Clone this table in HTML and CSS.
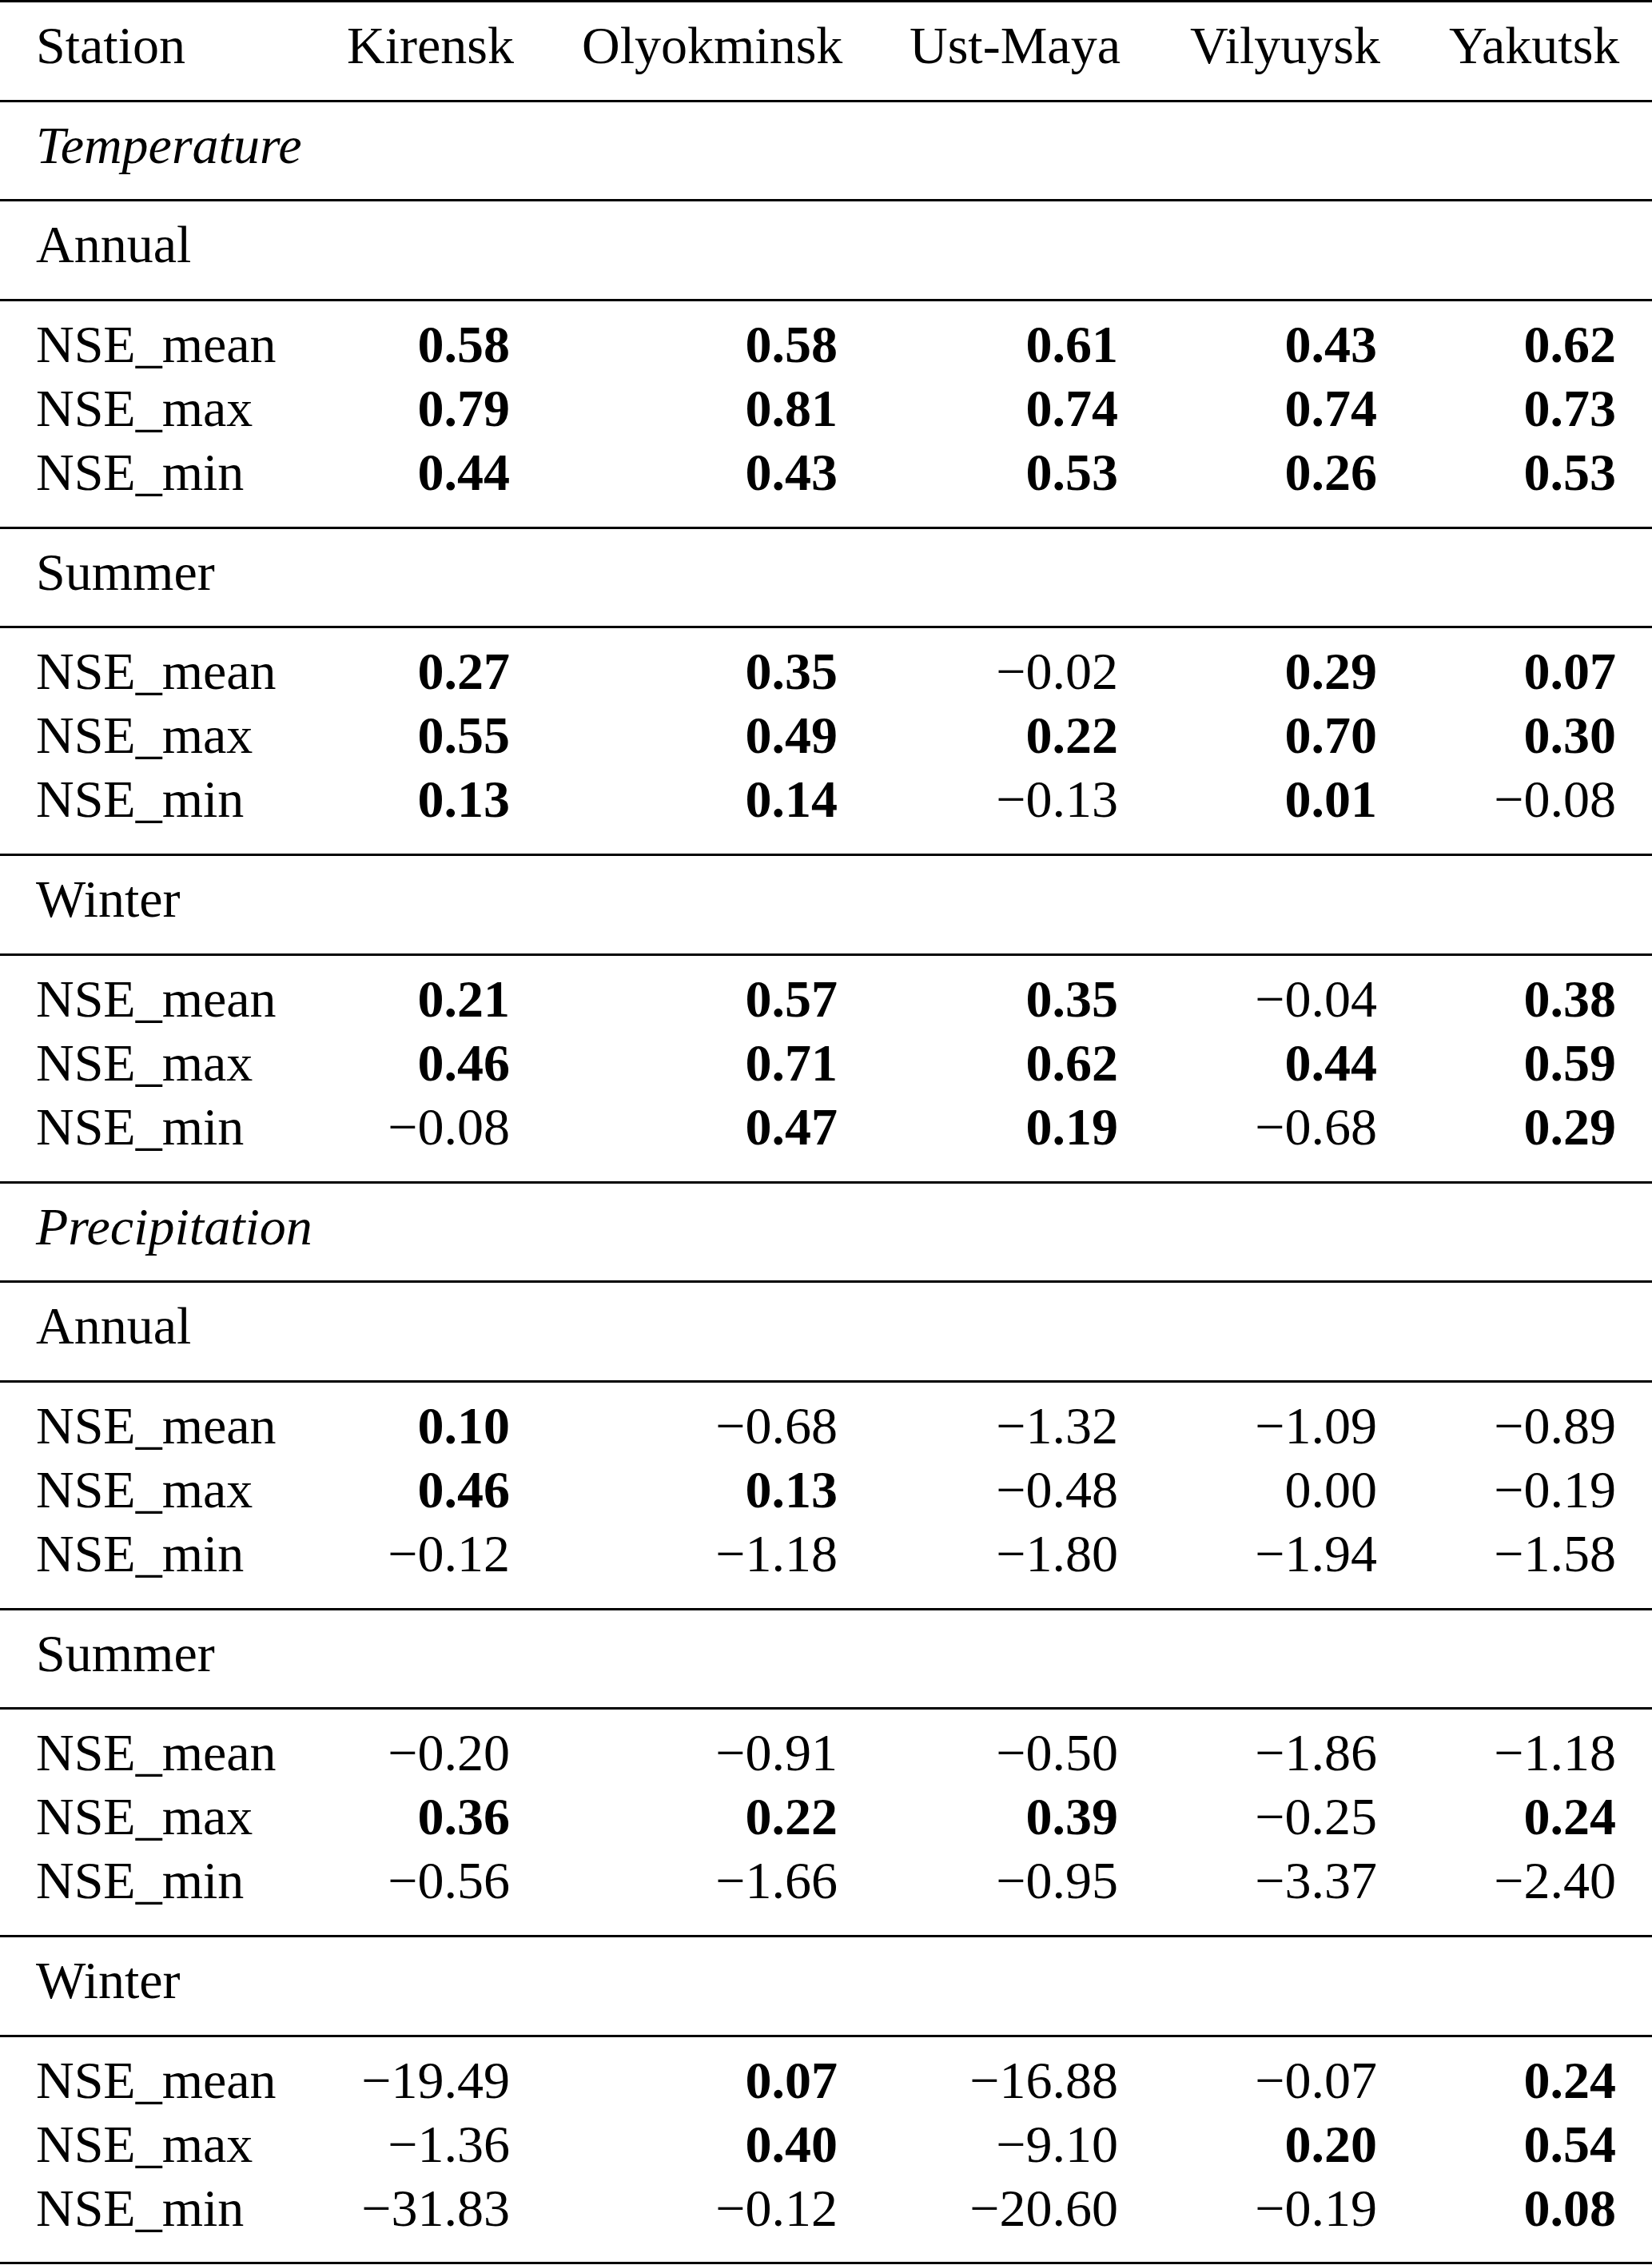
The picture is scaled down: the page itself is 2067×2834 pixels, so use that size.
FILE: index.html
```html
<!DOCTYPE html>
<html lang="en">
<head>
<meta charset="utf-8">
<title>NSE table</title>
<link rel="stylesheet" href="styles.css">
</head>
<body>
<table class="nse">
  <colgroup>
    <col class="c1"><col class="c2"><col class="c3"><col class="c4"><col class="c5"><col class="c6">
  </colgroup>
  <thead>
    <tr class="single">
      <th class="lbl">Station</th><th>Kirensk</th><th>Olyokminsk</th><th>Ust-Maya</th><th>Vilyuysk</th><th>Yakutsk</th>
    </tr>
  </thead>
  <tbody>
    <tr class="single"><td class="lbl it" colspan="6">Temperature</td></tr>
    <tr class="single"><td class="lbl" colspan="6">Annual</td></tr>
    <tr class="first"><td class="lbl">NSE_mean</td><td class="b">0.58</td><td class="b">0.58</td><td class="b">0.61</td><td class="b">0.43</td><td class="b">0.62</td></tr>
    <tr><td class="lbl">NSE_max</td><td class="b">0.79</td><td class="b">0.81</td><td class="b">0.74</td><td class="b">0.74</td><td class="b">0.73</td></tr>
    <tr class="last"><td class="lbl">NSE_min</td><td class="b">0.44</td><td class="b">0.43</td><td class="b">0.53</td><td class="b">0.26</td><td class="b">0.53</td></tr>
    <tr class="single"><td class="lbl" colspan="6">Summer</td></tr>
    <tr class="first"><td class="lbl">NSE_mean</td><td class="b">0.27</td><td class="b">0.35</td><td>&minus;0.02</td><td class="b">0.29</td><td class="b">0.07</td></tr>
    <tr><td class="lbl">NSE_max</td><td class="b">0.55</td><td class="b">0.49</td><td class="b">0.22</td><td class="b">0.70</td><td class="b">0.30</td></tr>
    <tr class="last"><td class="lbl">NSE_min</td><td class="b">0.13</td><td class="b">0.14</td><td>&minus;0.13</td><td class="b">0.01</td><td>&minus;0.08</td></tr>
    <tr class="single"><td class="lbl" colspan="6">Winter</td></tr>
    <tr class="first"><td class="lbl">NSE_mean</td><td class="b">0.21</td><td class="b">0.57</td><td class="b">0.35</td><td>&minus;0.04</td><td class="b">0.38</td></tr>
    <tr><td class="lbl">NSE_max</td><td class="b">0.46</td><td class="b">0.71</td><td class="b">0.62</td><td class="b">0.44</td><td class="b">0.59</td></tr>
    <tr class="last"><td class="lbl">NSE_min</td><td>&minus;0.08</td><td class="b">0.47</td><td class="b">0.19</td><td>&minus;0.68</td><td class="b">0.29</td></tr>
    <tr class="single"><td class="lbl it" colspan="6">Precipitation</td></tr>
    <tr class="single"><td class="lbl" colspan="6">Annual</td></tr>
    <tr class="first"><td class="lbl">NSE_mean</td><td class="b">0.10</td><td>&minus;0.68</td><td>&minus;1.32</td><td>&minus;1.09</td><td>&minus;0.89</td></tr>
    <tr><td class="lbl">NSE_max</td><td class="b">0.46</td><td class="b">0.13</td><td>&minus;0.48</td><td>0.00</td><td>&minus;0.19</td></tr>
    <tr class="last"><td class="lbl">NSE_min</td><td>&minus;0.12</td><td>&minus;1.18</td><td>&minus;1.80</td><td>&minus;1.94</td><td>&minus;1.58</td></tr>
    <tr class="single"><td class="lbl" colspan="6">Summer</td></tr>
    <tr class="first"><td class="lbl">NSE_mean</td><td>&minus;0.20</td><td>&minus;0.91</td><td>&minus;0.50</td><td>&minus;1.86</td><td>&minus;1.18</td></tr>
    <tr><td class="lbl">NSE_max</td><td class="b">0.36</td><td class="b">0.22</td><td class="b">0.39</td><td>&minus;0.25</td><td class="b">0.24</td></tr>
    <tr class="last"><td class="lbl">NSE_min</td><td>&minus;0.56</td><td>&minus;1.66</td><td>&minus;0.95</td><td>&minus;3.37</td><td>&minus;2.40</td></tr>
    <tr class="single"><td class="lbl" colspan="6">Winter</td></tr>
    <tr class="first"><td class="lbl">NSE_mean</td><td>&minus;19.49</td><td class="b">0.07</td><td>&minus;16.88</td><td>&minus;0.07</td><td class="b">0.24</td></tr>
    <tr><td class="lbl">NSE_max</td><td>&minus;1.36</td><td class="b">0.40</td><td>&minus;9.10</td><td class="b">0.20</td><td class="b">0.54</td></tr>
    <tr class="last"><td class="lbl">NSE_min</td><td>&minus;31.83</td><td>&minus;0.12</td><td>&minus;20.60</td><td>&minus;0.19</td><td class="b">0.08</td></tr>
  </tbody>
</table>
</body>
</html>
```

FILE: styles.css
```css
html, body {
  margin: 0;
  padding: 0;
  background: #ffffff;
}

.nse {
  width: 2067px;
  table-layout: fixed;
  border-collapse: collapse;
  border-top: 3px solid #000;
  font-family: "Liberation Serif", "Times New Roman", serif;
  font-size: 66px;
  line-height: 80px;
  color: #000;
}

.c1 { width: 389px; }
.c2 { width: 294px; }
.c3 { width: 410px; }
.c4 { width: 351px; }
.c5 { width: 324px; }
.c6 { width: 299px; }

.nse th,
.nse td {
  padding: 0 45px;
  text-align: right;
  font-weight: normal;
  white-space: nowrap;
  vertical-align: baseline;
}

.nse .lbl {
  text-align: left;
}

.nse .it {
  font-style: italic;
}

.nse .b {
  font-weight: bold;
}

.nse tr.single > th,
.nse tr.single > td,
.nse tr.first > td {
  padding-top: 14px;
}

.nse tr.single > th,
.nse tr.single > td,
.nse tr.last > td {
  padding-bottom: 27.7px;
  border-bottom: 3px solid #000;
}
```
